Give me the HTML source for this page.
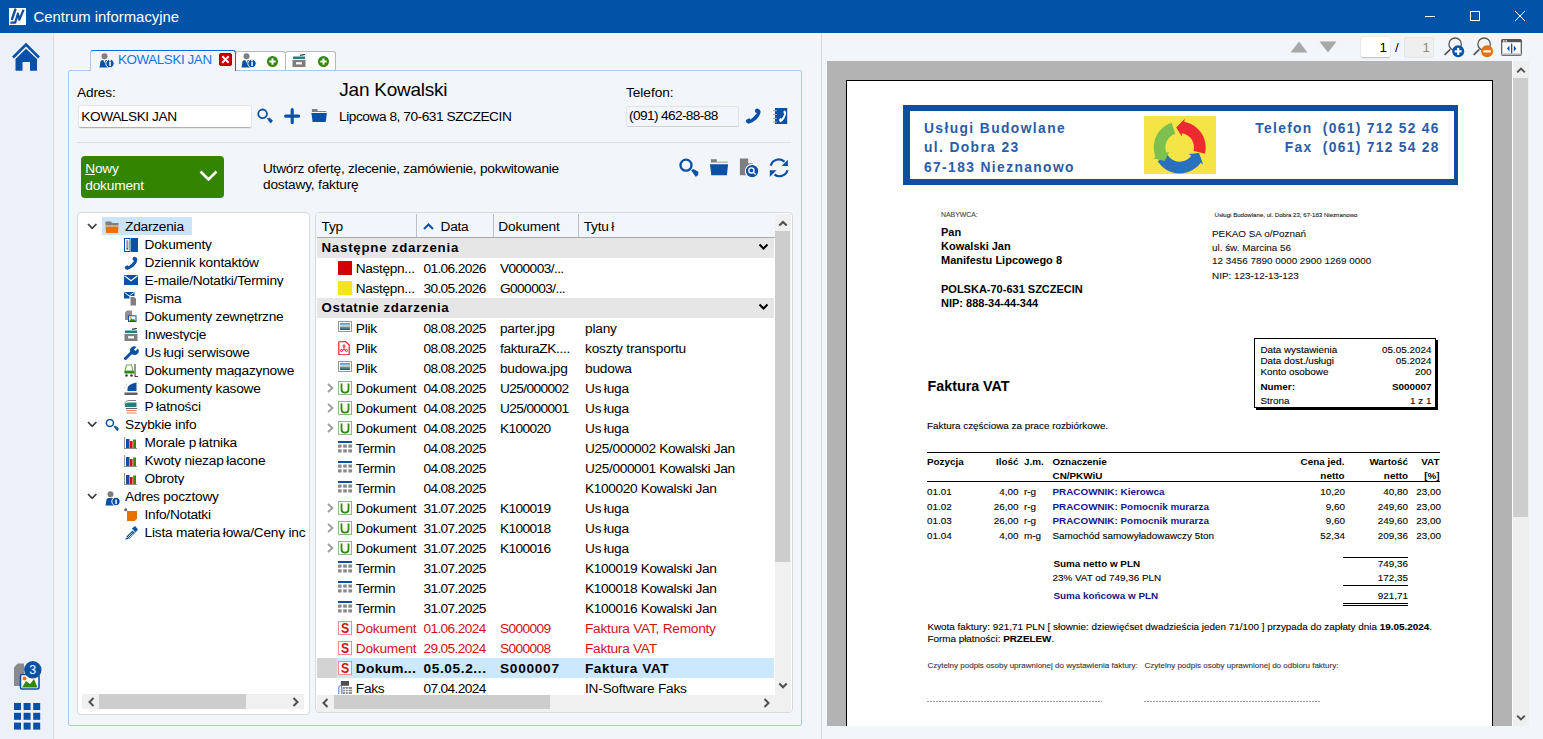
<!DOCTYPE html><html><head><meta charset="utf-8"><style>
html,body{margin:0;padding:0}
body{width:1543px;height:739px;overflow:hidden;position:relative;background:#F2F5FA;font-family:"Liberation Sans",sans-serif;color:#000}
.a{position:absolute}
.t{position:absolute;white-space:nowrap;line-height:1}
</style></head><body>
<div class="a" style="left:0px;top:0px;width:1543px;height:33px;background:#0053A6"></div>
<div class="a" style="left:9px;top:8px;width:17px;height:17px;background:#fff"></div>
<svg class="a" style="left:9px;top:8px" width="17" height="17" viewBox="0 0 17 17"><path d="M6.3 1.6 L3 11.2" stroke="#0F4FA8" stroke-width="2.5" stroke-linecap="round" stroke-dasharray="2 0.6"/><path d="M1.4 14.6 L6.2 14.6 L8.9 5.6 L10.3 11.8 L14.6 1.8" fill="none" stroke="#0F4FA8" stroke-width="2.2" stroke-linejoin="round"/></svg>
<div class="t" style="left:33.5px;top:9.79px;font-size:14.9px;color:#fff;">Centrum informacyjne</div>
<div class="a" style="left:1425px;top:16px;width:10px;height:1px;background:#fff"></div>
<div class="a" style="left:1470px;top:11px;width:8px;height:8px;border:1px solid #fff"></div>
<svg class="a" style="left:1514px;top:10px" width="12" height="12" viewBox="0 0 12 12"><path d="M1 1 L11 11 M11 1 L1 11" stroke="#fff" stroke-width="1"/></svg>
<div class="a" style="left:0px;top:33px;width:53px;height:706px;background:#ECF0F9"></div>
<div class="a" style="left:53px;top:33px;width:1px;height:706px;background:#DCDCDC"></div>
<div class="a" style="left:821px;top:33px;width:1px;height:706px;background:#D8D8D8"></div>
<svg class="a" style="left:10px;top:40px" width="34" height="34" viewBox="0 0 34 34"><path d="M3 17.5 L16 4.5 L29 17.5" fill="none" stroke="#0A51A6" stroke-width="2.6"/><path d="M5.5 19 L16 8.7 L27 19 L27 30.7 L20 30.7 L20 22 L12.5 22 L12.5 30.7 L5.5 30.7 Z" fill="#0A51A6"/></svg>
<svg class="a" style="left:12px;top:660px" width="34" height="32" viewBox="0 0 34 32"><path d="M2 7.5 L5.5 3.5 L12 3.5 L12 26 L2 26 Z" fill="#8A8A8A"/><rect x="8.5" y="14.5" width="18.5" height="14.5" rx="1.5" fill="#fff" stroke="#0A51A6" stroke-width="1.6"/><path d="M10 27.5 L14 21 L18 24 L22 19 L25.5 27.5 Z" fill="#2E8B0A"/><circle cx="12.5" cy="18.5" r="2" fill="#F07800"/><circle cx="20.8" cy="9.8" r="8.7" fill="#0A51A6"/><text x="20.8" y="14.3" font-size="12.5" fill="#fff" text-anchor="middle" font-family="Liberation Sans">3</text></svg>
<svg class="a" style="left:14px;top:703px" width="27" height="27" viewBox="0 0 27 27"><rect x="0.0" y="0.0" width="7" height="7" fill="#0A51A6"/><rect x="9.6" y="0.0" width="7" height="7" fill="#0A51A6"/><rect x="19.2" y="0.0" width="7" height="7" fill="#0A51A6"/><rect x="0.0" y="9.8" width="7" height="7" fill="#0A51A6"/><rect x="9.6" y="9.8" width="7" height="7" fill="#0A51A6"/><rect x="19.2" y="9.8" width="7" height="7" fill="#0A51A6"/><rect x="0.0" y="19.6" width="7" height="7" fill="#0A51A6"/><rect x="9.6" y="19.6" width="7" height="7" fill="#0A51A6"/><rect x="19.2" y="19.6" width="7" height="7" fill="#0A51A6"/></svg>
<div class="a" style="left:68px;top:70px;width:733px;height:655px;border:1px solid #A9C9EC;border-radius:2px;box-sizing:border-box;width:734px;height:656px"></div>
<div class="a" style="left:235px;top:51px;width:51px;height:19px;background:#fff;border:1px solid #B9B9B9;border-bottom:none;border-radius:3px 3px 0 0;box-sizing:border-box"></div>
<div class="a" style="left:285px;top:51px;width:51px;height:19px;background:#fff;border:1px solid #B9B9B9;border-bottom:none;border-radius:3px 3px 0 0;box-sizing:border-box"></div>
<div class="a" style="left:90px;top:50px;width:146px;height:21px;background:#F2F5FB;border:1px solid #A9C9EC;border-top:1px solid #0A6AD6;border-right:1px solid #0A6AD6;border-bottom:none;border-radius:3px 3px 0 0;box-sizing:border-box;box-shadow:inset 0 1px 0 #fff"></div>
<svg class="a" style="left:99px;top:53px" width="16" height="15" viewBox="0 0 16 15"><circle cx="5.5" cy="3.3" r="3" fill="#7F7F7F"/><path d="M0.5 14.5 L1.5 8.5 Q2 7 4 7 L7.5 7 Q9 7 9.5 8.5 L9.5 14.5 Z" fill="#0A51A6"/><path d="M4.3 7 L5.5 10 L6.7 7 Z" fill="#fff"/><circle cx="11" cy="10.5" r="4.2" fill="#0A51A6" stroke="#fff" stroke-width="1"/><rect x="10.3" y="8.6" width="1.5" height="4.4" fill="#fff"/><circle cx="11" cy="7.5" r="0.8" fill="#fff"/></svg>
<div class="t" style="left:118px;top:52.66px;font-size:13.4px;color:#1A72DA;letter-spacing:-0.4px">KOWALSKI JAN</div>
<svg class="a" style="left:219px;top:53px" width="13" height="13" viewBox="0 0 13 13"><rect x="0.5" y="0.5" width="12" height="12" rx="1.5" fill="#CC0000" stroke="#A80000" stroke-width="1"/><path d="M3.3 3.3 L9.7 9.7 M9.7 3.3 L3.3 9.7" stroke="#fff" stroke-width="2"/></svg>
<svg class="a" style="left:241px;top:53px" width="16" height="15" viewBox="0 0 16 15"><circle cx="5.5" cy="3.3" r="3" fill="#7F7F7F"/><path d="M0.5 14.5 L1.5 8.5 Q2 7 4 7 L7.5 7 Q9 7 9.5 8.5 L9.5 14.5 Z" fill="#0A51A6"/><path d="M4.3 7 L5.5 10 L6.7 7 Z" fill="#fff"/><circle cx="11" cy="10.5" r="4.2" fill="#0A51A6" stroke="#fff" stroke-width="1"/><rect x="10.3" y="8.6" width="1.5" height="4.4" fill="#fff"/><circle cx="11" cy="7.5" r="0.8" fill="#fff"/></svg>
<svg class="a" style="left:267px;top:55.5px" width="11" height="11" viewBox="0 0 11 11"><circle cx="5.5" cy="5.5" r="5.5" fill="#2E8B0A"/><rect x="2.3" y="4.5" width="6.4" height="2" fill="#fff"/><rect x="4.5" y="2.3" width="2" height="6.4" fill="#fff"/></svg>
<svg class="a" style="left:292px;top:54px" width="14" height="14" viewBox="0 0 14 14"><path d="M8 1.3 L13 0.3" stroke="#404040" stroke-width="1.2"/><rect x="1" y="2.5" width="12" height="2.6" fill="#1F8080"/><rect x="0.5" y="6" width="13" height="7" fill="#7F7F7F"/><rect x="4" y="8.2" width="6" height="2.2" fill="#fff"/></svg>
<svg class="a" style="left:317.5px;top:55.5px" width="11" height="11" viewBox="0 0 11 11"><circle cx="5.5" cy="5.5" r="5.5" fill="#2E8B0A"/><rect x="2.3" y="4.5" width="6.4" height="2" fill="#fff"/><rect x="4.5" y="2.3" width="2" height="6.4" fill="#fff"/></svg>
<div class="t" style="left:77px;top:86.30px;font-size:13.7px;letter-spacing:-0.149px;">Adres:</div>
<div class="a" style="left:79px;top:106px;width:172px;height:21.5px;background:#fff;border-radius:2px;border-bottom:1px solid #B0B0B0;box-shadow:0 0 0 1px #E6E6E6;box-sizing:border-box"></div>
<div class="t" style="left:81.3px;top:109.60px;font-size:13.7px;letter-spacing:-0.445px;">KOWALSKI JAN</div>
<svg class="a" style="left:254px;top:104px" width="22" height="22" viewBox="0 0 22 22"><circle cx="8.6" cy="9.85" r="4.35" fill="none" stroke="#0A51A6" stroke-width="1.8"/><path d="M13.3 14.5 L15.6 14 L18.5 16.6 L17.2 18.7 L16 18.5 Z" fill="#0A51A6" stroke="#0A51A6" stroke-width="0.6" stroke-linejoin="round"/></svg>
<svg class="a" style="left:284px;top:108px" width="16" height="16" viewBox="0 0 16 16"><path d="M1.6 8.1 L14.6 8.1 M8.2 1.6 L8.2 14.6" stroke="#0A51A6" stroke-width="3.1" stroke-linecap="round"/></svg>
<svg class="a" style="left:311px;top:108px" width="16" height="16" viewBox="0 0 16 16"><path d="M0.9 0.9 L6.5 0.9 L6.5 3.1 L15.2 3.1 L15.2 3.9 L0.9 3.9 Z" fill="#7F7F7F"/><path d="M0.4 5.1 L15.9 5.1 L14.7 14 L1.6 14 Z" fill="#0A51A6"/></svg>
<div class="t" style="left:339.3px;top:79.72px;font-size:19px;letter-spacing:-0.240px;">Jan Kowalski</div>
<div class="t" style="left:339px;top:110.10px;font-size:13.7px;letter-spacing:-0.453px;">Lipcowa 8, 70-631 SZCZECIN</div>
<div class="t" style="left:626px;top:85.70px;font-size:13.7px;letter-spacing:-0.048px;">Telefon:</div>
<div class="a" style="left:626px;top:106px;width:113px;height:21px;background:#F2F5FB;border:1px solid #E3E3E3;border-bottom-color:#CFCFCF;border-radius:2px;box-sizing:border-box"></div>
<div class="t" style="left:629px;top:109.40px;font-size:13.7px;letter-spacing:-0.630px;">(091) 462-88-88</div>
<svg class="a" style="left:745px;top:108px" width="17" height="17" viewBox="0 0 17 17"><path d="M12.26 0.5 Q15 0.9 15.6 3.3 Q15.6 7 11.6 11.26 Q8 14.5 3.82 15.7 Q1.6 15.6 0.7 12.88 Q1.2 11.5 2.19 11.26 L4.47 10.29 L5.44 11.4 Q8.5 9.8 11.94 5.09 L10.31 4.6 Q9.8 3.3 10.2 1.6 Q10.8 0.5 12.26 0.5 Z" fill="#0A51A6"/></svg>
<svg class="a" style="left:772px;top:108px" width="16" height="16" viewBox="0 0 16 16"><rect x="3" y="0" width="12.2" height="16" fill="#0A51A6"/><path d="M1 2.7 L5 2.7 M1 6.5 L5 6.5 M1 10.3 L5 10.3 M1 14 L5 14" stroke="#A8A8A8" stroke-width="1.1"/><g transform="translate(6.7 2) scale(0.48 0.78)"><path d="M12.26 0.5 Q15 0.9 15.6 3.3 Q15.6 7 11.6 11.26 Q8 14.5 3.82 15.7 Q1.6 15.6 0.7 12.88 Q1.2 11.5 2.19 11.26 L4.47 10.29 L5.44 11.4 Q8.5 9.8 11.94 5.09 L10.31 4.6 Q9.8 3.3 10.2 1.6 Q10.8 0.5 12.26 0.5 Z" fill="#fff"/></g></svg>
<div class="a" style="left:77px;top:142px;width:714px;height:1px;background:#D9DDE3"></div>
<div class="a" style="left:81px;top:156px;width:143px;height:42px;background:#338500;border-radius:4px"></div>
<div class="t" style="left:85.3px;top:162.20px;font-size:13.7px;color:#fff;letter-spacing:-0.263px;"><u>N</u>owy</div>
<div class="t" style="left:85.3px;top:179.00px;font-size:13.7px;color:#fff;letter-spacing:-0.200px;">dokument</div>
<svg class="a" style="left:199px;top:170px" width="19" height="12" viewBox="0 0 19 12"><path d="M1.5 1.5 L9.5 9.5 L17.5 1.5" fill="none" stroke="#fff" stroke-width="2.6"/></svg>
<div class="t" style="left:263px;top:161.70px;font-size:13.7px;letter-spacing:-0.264px;">Utwórz ofertę, zlecenie, zamówienie, pokwitowanie</div>
<div class="t" style="left:263px;top:177.70px;font-size:13.7px;letter-spacing:-0.194px;">dostawy, fakturę</div>
<svg class="a" style="left:670px;top:150px" width="130" height="40" viewBox="0 0 130 40"><circle cx="16" cy="15.2" r="5.5" fill="none" stroke="#0A51A6" stroke-width="2.3"/><path d="M21.6 20.2 L23.6 19.6 L28 22 L27.6 25.2 L25.6 26.3 Z" fill="#0A51A6" stroke="#0A51A6" stroke-width="0.8" stroke-linejoin="round"/><path d="M40.9 9.3 L46.8 9.3 L46.8 11.8 L57.7 11.8 L57.7 12.6 L40.9 12.6 Z" fill="#7F7F7F"/><path d="M40 14.3 L58.1 14.3 L56.9 25.3 L41.3 25.3 Z" fill="#0A51A6"/><path d="M69.9 8.4 L78 8.4 L83 13.5 L83 25.3 L69.9 25.3 Z" fill="#7F7F7F"/><path d="M78.3 8.4 L83 13.2 L78.3 13.2 Z" fill="#fff"/><circle cx="82.1" cy="21.1" r="7.3" fill="#fff"/><circle cx="82.1" cy="21.1" r="6.2" fill="#0A51A6"/><circle cx="81.4" cy="20.4" r="2.6" fill="none" stroke="#fff" stroke-width="1.3"/><path d="M83.3 22.3 L85.6 24.6" stroke="#fff" stroke-width="1.4"/><path d="M100.8 15.6 A8.3 8.3 0 0 1 114.6 11.8" fill="none" stroke="#0A51A6" stroke-width="2.2"/><path d="M117.9 9.7 L117.9 16 L111.6 16 Z" fill="#0A51A6"/><path d="M117.5 20.2 A8.3 8.3 0 0 1 104.5 24.5" fill="none" stroke="#0A51A6" stroke-width="2.2"/><path d="M99.8 20.2 L106.6 20.2 L99.8 27 Z" fill="#0A51A6"/></svg>
<div class="a" style="left:77px;top:212px;width:233px;height:503px;background:#fff;border:1px solid #D9D9D9;border-radius:4px;box-sizing:border-box"></div>
<div class="a" style="left:102px;top:217px;width:90px;height:18px;background:#CCE4F7"></div>
<svg class="a" style="left:87.2px;top:223.2px" width="10.4" height="6.3" viewBox="0 0 10.4 6.3"><path d="M1 1 L5.2 5.3 L9.4 1" fill="none" stroke="#3C3C3C" stroke-width="1.7"/></svg>
<svg class="a" style="left:105px;top:221px" width="15" height="15" viewBox="0 0 15 15"><path d="M0.5 0.5 L6 0.5 L7 2 L13.5 2 L13.5 4.5 L0.5 4.5 Z" fill="#7F7F7F"/><path d="M0.5 5.5 L13.5 5.5 L13 12 L1 12 Z" fill="#E87200"/></svg>
<div class="t" style="left:125px;top:219.50px;font-size:13.7px;letter-spacing:-0.228px;">Zdarzenia</div>
<svg class="a" style="left:124px;top:238px" width="15" height="15" viewBox="0 0 15 15"><rect x="0.5" y="0.5" width="5.5" height="13" fill="#fff" stroke="#0A51A6" stroke-width="1"/><rect x="2.2" y="2" width="2.2" height="10" rx="1.1" fill="#9A9A9A"/><rect x="2.8" y="10" width="1" height="1" fill="#333"/><rect x="7" y="0" width="7" height="14" fill="#0A51A6"/></svg>
<div class="t" style="left:144.5px;top:237.50px;font-size:13.7px;width:161px;overflow:hidden;letter-spacing:-0.228px;">Dokumenty</div>
<svg class="a" style="left:124px;top:256px" width="15" height="15" viewBox="0 0 15 15"><g transform="translate(0 0.4) scale(0.86)"><path d="M12.26 0.5 Q15 0.9 15.6 3.3 Q15.6 7 11.6 11.26 Q8 14.5 3.82 15.7 Q1.6 15.6 0.7 12.88 Q1.2 11.5 2.19 11.26 L4.47 10.29 L5.44 11.4 Q8.5 9.8 11.94 5.09 L10.31 4.6 Q9.8 3.3 10.2 1.6 Q10.8 0.5 12.26 0.5 Z" fill="#0A51A6"/></g></svg>
<div class="t" style="left:144.5px;top:255.50px;font-size:13.7px;width:161px;overflow:hidden;letter-spacing:-0.203px;">Dziennik kontaktów</div>
<svg class="a" style="left:124px;top:274px" width="15" height="15" viewBox="0 0 15 15"><rect x="0" y="1" width="14" height="10" fill="#0A51A6"/><path d="M0.5 1.8 L7 6.8 L13.5 1.8" fill="none" stroke="#fff" stroke-width="1.2"/></svg>
<div class="t" style="left:144.5px;top:273.50px;font-size:13.7px;width:161px;overflow:hidden;letter-spacing:-0.246px;">E-maile/Notatki/Terminy</div>
<svg class="a" style="left:124px;top:292px" width="15" height="15" viewBox="0 0 15 15"><rect x="0" y="0" width="10.5" height="6.5" fill="#0A51A6"/><path d="M0.6 0.6 L5.25 4 L9.9 0.6" fill="none" stroke="#fff" stroke-width="1"/><path d="M5.5 4 L10.5 4 L13 6.5 L13 14 L5.5 14 Z" fill="#fff"/><path d="M6.5 5 L10.2 5 L12 6.8 L12 13.5 L6.5 13.5 Z" fill="#7F7F7F"/></svg>
<div class="t" style="left:144.5px;top:291.50px;font-size:13.7px;width:161px;overflow:hidden;letter-spacing:-0.250px;">Pisma</div>
<svg class="a" style="left:124px;top:310px" width="15" height="15" viewBox="0 0 15 15"><path d="M1 2.5 L3 0.5 L8 0.5 L8 10 L1 10 Z" fill="#8F8F8F"/><rect x="4.5" y="5.8" width="7.5" height="5.7" fill="#fff" stroke="#0A51A6" stroke-width="1"/><path d="M5.2 11 L7.3 8.3 L9 9.8 L10 8.8 L11.5 11 Z" fill="#2E8B0A"/><circle cx="6.4" cy="7.6" r="0.8" fill="#F07800"/></svg>
<div class="t" style="left:144.5px;top:309.50px;font-size:13.7px;width:161px;overflow:hidden;letter-spacing:-0.203px;">Dokumenty zewnętrzne</div>
<svg class="a" style="left:124px;top:328px" width="15" height="15" viewBox="0 0 15 15"><path d="M8 1.3 L13 0.3" stroke="#404040" stroke-width="1.2"/><rect x="1" y="2.5" width="12" height="2.6" fill="#1F8080"/><rect x="0.5" y="6" width="13" height="7" fill="#7F7F7F"/><rect x="4" y="8.2" width="6" height="2.2" fill="#fff"/></svg>
<div class="t" style="left:144.5px;top:327.50px;font-size:13.7px;width:161px;overflow:hidden;letter-spacing:-0.225px;">Inwestycje</div>
<svg class="a" style="left:124px;top:346px" width="15" height="15" viewBox="0 0 15 15"><path d="M1.5 12.5 L8 6" stroke="#0A51A6" stroke-width="3" stroke-linecap="round"/><path d="M6.5 6.5 A4.2 4.2 0 0 1 12.5 1 L10 3.5 L11.5 5 L14 2.5 A4.2 4.2 0 0 1 8.5 8.5 Z" fill="#0A51A6"/></svg>
<div class="t" style="left:144.5px;top:345.50px;font-size:13.7px;width:161px;overflow:hidden;letter-spacing:-0.191px;">Us ługi serwisowe</div>
<svg class="a" style="left:124px;top:364px" width="15" height="15" viewBox="0 0 15 15"><path d="M2.5 1 L7.5 1 L9 7 L1 7 Z" fill="none" stroke="#6DAA5A" stroke-width="1.1"/><rect x="0.5" y="7" width="9.5" height="2.5" fill="#2E8B0A"/><circle cx="2.5" cy="11.5" r="1.3" fill="#404040"/><circle cx="7.5" cy="11.5" r="1.3" fill="#404040"/><path d="M11 0 L11 12.5 L14 12.5" fill="none" stroke="#404040" stroke-width="1.1"/></svg>
<div class="t" style="left:144.5px;top:363.50px;font-size:13.7px;width:161px;overflow:hidden;letter-spacing:-0.203px;">Dokumenty magazynowe</div>
<svg class="a" style="left:124px;top:382px" width="15" height="15" viewBox="0 0 15 15"><path d="M3.5 9 L3.5 6 Q4 2 12.5 0.5 L12.5 9 Z" fill="#0A51A6"/><rect x="0.5" y="10.5" width="13" height="2.5" fill="#606060"/><path d="M0.5 5.5 L1 5.5 M2 3 L2.5 3" stroke="#606060" stroke-width="0.9"/></svg>
<div class="t" style="left:144.5px;top:381.50px;font-size:13.7px;width:161px;overflow:hidden;letter-spacing:-0.203px;">Dokumenty kasowe</div>
<svg class="a" style="left:124px;top:400px" width="15" height="15" viewBox="0 0 15 15"><path d="M1 4 Q1 0.5 6 0.5 L12 0.5" fill="none" stroke="#7F7F7F" stroke-width="1"/><path d="M1 5 Q1 2.5 5 2.5 L12.5 2.5 L12.5 7 L1 7 Z" fill="#1F8080"/><path d="M2 8.5 L13 8.5" stroke="#606060" stroke-width="1"/><path d="M2.5 10.5 L12.5 10.5 M2.5 13 L12.5 13" stroke="#F07850" stroke-width="1.1"/></svg>
<div class="t" style="left:144.5px;top:399.50px;font-size:13.7px;width:161px;overflow:hidden;letter-spacing:-0.205px;">P łatności</div>
<svg class="a" style="left:87.2px;top:421.2px" width="10.4" height="6.3" viewBox="0 0 10.4 6.3"><path d="M1 1 L5.2 5.3 L9.4 1" fill="none" stroke="#3C3C3C" stroke-width="1.7"/></svg>
<svg class="a" style="left:105px;top:419px" width="15" height="15" viewBox="0 0 15 15"><circle cx="4.9" cy="4" r="3.55" fill="none" stroke="#0A51A6" stroke-width="1.5"/><path d="M8.9 7.4 L10.2 7.1 L13.4 9.3 L13 11.4 L12 11.6 Z" fill="#0A51A6" stroke="#0A51A6" stroke-width="0.6" stroke-linejoin="round"/></svg>
<div class="t" style="left:125px;top:417.50px;font-size:13.7px;letter-spacing:-0.204px;">Szybkie info</div>
<svg class="a" style="left:124px;top:436px" width="15" height="15" viewBox="0 0 15 15"><rect x="0" y="1" width="0.8" height="12" fill="#808080"/><rect x="0" y="12.2" width="13" height="0.8" fill="#808080"/><rect x="2" y="3" width="3.5" height="9.2" fill="#0A51A6"/><rect x="6" y="5" width="2.6" height="7.2" fill="#D01010"/><rect x="9.2" y="3.5" width="2.8" height="8.7" fill="#2E8B0A"/></svg>
<div class="t" style="left:144.5px;top:435.50px;font-size:13.7px;width:161px;overflow:hidden;letter-spacing:-0.191px;">Morale p łatnika</div>
<svg class="a" style="left:124px;top:454px" width="15" height="15" viewBox="0 0 15 15"><rect x="0" y="1" width="0.8" height="12" fill="#808080"/><rect x="0" y="12.2" width="13" height="0.8" fill="#808080"/><rect x="2" y="3" width="3.5" height="9.2" fill="#0A51A6"/><rect x="6" y="5" width="2.6" height="7.2" fill="#D01010"/><rect x="9.2" y="3.5" width="2.8" height="8.7" fill="#2E8B0A"/></svg>
<div class="t" style="left:144.5px;top:453.50px;font-size:13.7px;width:161px;overflow:hidden;letter-spacing:-0.192px;">Kwoty niezap łacone</div>
<svg class="a" style="left:124px;top:472px" width="15" height="15" viewBox="0 0 15 15"><rect x="0" y="1" width="0.8" height="12" fill="#808080"/><rect x="0" y="12.2" width="13" height="0.8" fill="#808080"/><rect x="2" y="3" width="3.5" height="9.2" fill="#0A51A6"/><rect x="6" y="5" width="2.6" height="7.2" fill="#D01010"/><rect x="9.2" y="3.5" width="2.8" height="8.7" fill="#2E8B0A"/></svg>
<div class="t" style="left:144.5px;top:471.50px;font-size:13.7px;width:161px;overflow:hidden;letter-spacing:-0.242px;">Obroty</div>
<svg class="a" style="left:87.2px;top:493.2px" width="10.4" height="6.3" viewBox="0 0 10.4 6.3"><path d="M1 1 L5.2 5.3 L9.4 1" fill="none" stroke="#3C3C3C" stroke-width="1.7"/></svg>
<svg class="a" style="left:105px;top:491px" width="15" height="15" viewBox="0 0 15 15"><circle cx="5.5" cy="3.3" r="3" fill="#7F7F7F"/><path d="M0.5 14.5 L1.5 8.5 Q2 7 4 7 L7.5 7 Q9 7 9.5 8.5 L9.5 14.5 Z" fill="#0A51A6"/><circle cx="11" cy="10.5" r="4.2" fill="#0A51A6" stroke="#fff" stroke-width="1"/><rect x="10.3" y="8.6" width="1.5" height="4.4" fill="#fff"/></svg>
<div class="t" style="left:125px;top:489.50px;font-size:13.7px;letter-spacing:-0.204px;">Adres pocztowy</div>
<svg class="a" style="left:124px;top:508px" width="15" height="15" viewBox="0 0 15 15"><path d="M3 3 L13 3 L13 10.5 L10.5 13 L3 13 Z" fill="#E87200"/><circle cx="1.7" cy="1.7" r="1.5" fill="#606060"/></svg>
<div class="t" style="left:144.5px;top:507.50px;font-size:13.7px;width:161px;overflow:hidden;letter-spacing:-0.250px;">Info/Notatki</div>
<svg class="a" style="left:124px;top:526px" width="15" height="15" viewBox="0 0 15 15"><path d="M1 13.5 L3 11 L5 13 Z" fill="#0A51A6"/><path d="M2.5 10.5 L8.5 4.5 L11 7 L5 13 Z" fill="#0A51A6"/><path d="M3.5 11.5 L8.5 6.5 M4.5 12.5 L9.5 7.5" stroke="#fff" stroke-width="0.7"/><path d="M8 2.5 L11 0 L14 3.5 L11.5 6.5 Z" fill="#0A51A6"/></svg>
<div class="t" style="left:144.5px;top:525.50px;font-size:13.7px;width:161px;overflow:hidden;letter-spacing:-0.200px;">Lista materia łowa/Ceny inc</div>
<div class="a" style="left:82px;top:694px;width:222px;height:15px;background:#F0F0F0"></div>
<div class="a" style="left:99px;top:694px;width:147px;height:15px;background:#CDCDCD"></div>
<svg class="a" style="left:87px;top:697px" width="9" height="10" viewBox="0 0 9 10"><path d="M6.5 1 L2.5 5 L6.5 9" fill="none" stroke="#505050" stroke-width="2"/></svg>
<svg class="a" style="left:291px;top:697px" width="9" height="10" viewBox="0 0 9 10"><path d="M2.5 1 L6.5 5 L2.5 9" fill="none" stroke="#505050" stroke-width="2"/></svg>
<div class="a" style="left:315px;top:212px;width:478px;height:501px;background:#fff;border:1px solid #D9D9D9;border-radius:4px;box-sizing:border-box"></div>
<div class="a" style="left:316px;top:213px;width:459px;height:24px;background:#F2F5FB;border-radius:3px 0 0 0"></div>
<div class="a" style="left:317px;top:237px;width:458px;height:1px;background:#A8A8A8"></div>
<div class="a" style="left:416px;top:214px;width:1px;height:23px;background:#C0C0C0"></div>
<div class="a" style="left:493px;top:214px;width:1px;height:23px;background:#C0C0C0"></div>
<div class="a" style="left:578px;top:214px;width:1px;height:23px;background:#C0C0C0"></div>
<div class="t" style="left:321.6px;top:220.30px;font-size:13.7px;letter-spacing:-0.283px;">Typ</div>
<svg class="a" style="left:423px;top:223px" width="11" height="7" viewBox="0 0 11 7"><path d="M1 6 L5.5 1.5 L10 6" fill="none" stroke="#0A51A6" stroke-width="2"/></svg>
<div class="t" style="left:440.6px;top:220.30px;font-size:13.7px;letter-spacing:-0.263px;">Data</div>
<div class="t" style="left:498.3px;top:220.30px;font-size:13.7px;letter-spacing:-0.142px;">Dokument</div>
<div class="t" style="left:583.7px;top:220.30px;font-size:13.7px;letter-spacing:-0.208px;">Tytu ł</div>
<div class="a" style="left:775px;top:214px;width:16px;height:481px;background:#F0F0F0"></div>
<div class="a" style="left:775px;top:231px;width:15px;height:331px;background:#CDCDCD"></div>
<svg class="a" style="left:777px;top:217px" width="12" height="12" viewBox="0 0 12 12"><path d="M2.3 8.6 L6 4.9 L9.7 8.6" fill="none" stroke="#505050" stroke-width="2.1"/></svg>
<svg class="a" style="left:777px;top:680px" width="12" height="12" viewBox="0 0 12 12"><path d="M2.3 3.6 L6 7.3 L9.7 3.6" fill="none" stroke="#505050" stroke-width="2.1"/></svg>
<div class="a" style="left:317px;top:238px;width:457px;height:20px;background:#E6E6E6"></div>
<div class="t" style="left:321.5px;top:240.64px;font-size:13.3px;font-weight:bold;letter-spacing:0.746px">Następne zdarzenia</div>
<svg class="a" style="left:758px;top:243px" width="11" height="8" viewBox="0 0 11 8"><path d="M1.5 1.5 L5.5 5.5 L9.5 1.5" fill="none" stroke="#000" stroke-width="2"/></svg>
<div class="a" style="left:317px;top:298px;width:457px;height:20px;background:#E6E6E6"></div>
<div class="t" style="left:321.5px;top:300.64px;font-size:13.3px;font-weight:bold;letter-spacing:0.571px">Ostatnie zdarzenia</div>
<svg class="a" style="left:758px;top:303px" width="11" height="8" viewBox="0 0 11 8"><path d="M1.5 1.5 L5.5 5.5 L9.5 1.5" fill="none" stroke="#000" stroke-width="2"/></svg>
<div class="a" style="left:338px;top:261px;width:14px;height:14px;background:#D40000"></div>
<div class="t" style="left:355.8px;top:261.60px;font-size:13.7px;letter-spacing:-0.345px;">Następn...</div>
<div class="t" style="left:423.5px;top:261.60px;font-size:13.7px;letter-spacing:-0.640px;">01.06.2026</div>
<div class="t" style="left:500px;top:261.60px;font-size:13.7px;letter-spacing:-0.586px;">V000003/...</div>
<div class="a" style="left:338px;top:281px;width:14px;height:14px;background:#F7E51C"></div>
<div class="t" style="left:355.8px;top:281.60px;font-size:13.7px;letter-spacing:-0.345px;">Następn...</div>
<div class="t" style="left:423.5px;top:281.60px;font-size:13.7px;letter-spacing:-0.640px;">30.05.2026</div>
<div class="t" style="left:500px;top:281.60px;font-size:13.7px;letter-spacing:-0.586px;">G000003/...</div>
<svg class="a" style="left:338px;top:321px" width="14" height="14" viewBox="0 0 14 14"><rect x="0.5" y="0.5" width="13" height="10" fill="#fff" stroke="#9A9A9A" stroke-width="1"/><defs><linearGradient id="gi" x1="0" y1="0" x2="0" y2="1"><stop offset="0" stop-color="#3C8CE0"/><stop offset="0.45" stop-color="#CFE4F5"/><stop offset="0.6" stop-color="#6F9A6A"/><stop offset="1" stop-color="#1E5A86"/></linearGradient></defs><rect x="2" y="2" width="10" height="7" fill="url(#gi)"/></svg>
<div class="t" style="left:355.8px;top:321.60px;font-size:13.7px;letter-spacing:-0.263px;">Plik</div>
<div class="t" style="left:423.5px;top:321.60px;font-size:13.7px;letter-spacing:-0.640px;">08.08.2025</div>
<div class="t" style="left:500px;top:321.60px;font-size:13.7px;letter-spacing:-0.240px;">parter.jpg</div>
<div class="t" style="left:585px;top:321.60px;font-size:13.7px;letter-spacing:-0.200px;">plany</div>
<svg class="a" style="left:338px;top:341px" width="14" height="14" viewBox="0 0 14 14"><path d="M0.8 0.8 L8 0.8 L11.2 4 L11.2 13.7 L0.8 13.7 Z" fill="#fff" stroke="#E8141A" stroke-width="1.1" stroke-linejoin="round"/><circle cx="6" cy="5" r="1.1" fill="none" stroke="#E8141A" stroke-width="0.9"/><circle cx="3.5" cy="9.5" r="1.1" fill="none" stroke="#E8141A" stroke-width="0.9"/><circle cx="8.5" cy="9.5" r="1.1" fill="none" stroke="#E8141A" stroke-width="0.9"/><path d="M6 6 L6 8.5 L4.3 9.3 M6 8.5 L7.7 9.3" stroke="#E8141A" stroke-width="0.9" fill="none"/></svg>
<div class="t" style="left:355.8px;top:341.60px;font-size:13.7px;letter-spacing:-0.263px;">Plik</div>
<div class="t" style="left:423.5px;top:341.60px;font-size:13.7px;letter-spacing:-0.640px;">08.08.2025</div>
<div class="t" style="left:500px;top:341.60px;font-size:13.7px;letter-spacing:-0.362px;">fakturaZK....</div>
<div class="t" style="left:585px;top:341.60px;font-size:13.7px;letter-spacing:-0.188px;">koszty transportu</div>
<svg class="a" style="left:338px;top:361px" width="14" height="14" viewBox="0 0 14 14"><rect x="0.5" y="0.5" width="13" height="10" fill="#fff" stroke="#9A9A9A" stroke-width="1"/><defs><linearGradient id="gi" x1="0" y1="0" x2="0" y2="1"><stop offset="0" stop-color="#3C8CE0"/><stop offset="0.45" stop-color="#CFE4F5"/><stop offset="0.6" stop-color="#6F9A6A"/><stop offset="1" stop-color="#1E5A86"/></linearGradient></defs><rect x="2" y="2" width="10" height="7" fill="url(#gi)"/></svg>
<div class="t" style="left:355.8px;top:361.60px;font-size:13.7px;letter-spacing:-0.263px;">Plik</div>
<div class="t" style="left:423.5px;top:361.60px;font-size:13.7px;letter-spacing:-0.640px;">08.08.2025</div>
<div class="t" style="left:500px;top:361.60px;font-size:13.7px;letter-spacing:-0.240px;">budowa.jpg</div>
<div class="t" style="left:585px;top:361.60px;font-size:13.7px;letter-spacing:-0.200px;">budowa</div>
<svg class="a" style="left:338px;top:381px" width="14" height="14" viewBox="0 0 14 14"><rect x="0.5" y="0.5" width="13" height="13" fill="#fff" stroke="#8DBA86" stroke-width="1"/><path d="M3.5 2.5 L3.5 8.5 Q3.5 11.6 7 11.6 Q10.5 11.6 10.5 8.5 L10.5 2.5" fill="none" stroke="#2E8A00" stroke-width="1.8"/></svg>
<svg class="a" style="left:326px;top:383px" width="9" height="10" viewBox="0 0 9 10"><path d="M2 1 L6.5 5 L2 9" fill="none" stroke="#9A9A9A" stroke-width="1.7"/></svg>
<div class="t" style="left:355.8px;top:381.60px;font-size:13.7px;letter-spacing:-0.231px;">Dokument</div>
<div class="t" style="left:423.5px;top:381.60px;font-size:13.7px;letter-spacing:-0.640px;">04.08.2025</div>
<div class="t" style="left:500px;top:381.60px;font-size:13.7px;letter-spacing:-0.595px;">U25/000002</div>
<div class="t" style="left:585px;top:381.60px;font-size:13.7px;letter-spacing:-0.207px;">Us ługa</div>
<svg class="a" style="left:338px;top:401px" width="14" height="14" viewBox="0 0 14 14"><rect x="0.5" y="0.5" width="13" height="13" fill="#fff" stroke="#8DBA86" stroke-width="1"/><path d="M3.5 2.5 L3.5 8.5 Q3.5 11.6 7 11.6 Q10.5 11.6 10.5 8.5 L10.5 2.5" fill="none" stroke="#2E8A00" stroke-width="1.8"/></svg>
<svg class="a" style="left:326px;top:403px" width="9" height="10" viewBox="0 0 9 10"><path d="M2 1 L6.5 5 L2 9" fill="none" stroke="#9A9A9A" stroke-width="1.7"/></svg>
<div class="t" style="left:355.8px;top:401.60px;font-size:13.7px;letter-spacing:-0.231px;">Dokument</div>
<div class="t" style="left:423.5px;top:401.60px;font-size:13.7px;letter-spacing:-0.640px;">04.08.2025</div>
<div class="t" style="left:500px;top:401.60px;font-size:13.7px;letter-spacing:-0.595px;">U25/000001</div>
<div class="t" style="left:585px;top:401.60px;font-size:13.7px;letter-spacing:-0.207px;">Us ługa</div>
<svg class="a" style="left:338px;top:421px" width="14" height="14" viewBox="0 0 14 14"><rect x="0.5" y="0.5" width="13" height="13" fill="#fff" stroke="#8DBA86" stroke-width="1"/><path d="M3.5 2.5 L3.5 8.5 Q3.5 11.6 7 11.6 Q10.5 11.6 10.5 8.5 L10.5 2.5" fill="none" stroke="#2E8A00" stroke-width="1.8"/></svg>
<svg class="a" style="left:326px;top:423px" width="9" height="10" viewBox="0 0 9 10"><path d="M2 1 L6.5 5 L2 9" fill="none" stroke="#9A9A9A" stroke-width="1.7"/></svg>
<div class="t" style="left:355.8px;top:421.60px;font-size:13.7px;letter-spacing:-0.231px;">Dokument</div>
<div class="t" style="left:423.5px;top:421.60px;font-size:13.7px;letter-spacing:-0.640px;">04.08.2025</div>
<div class="t" style="left:500px;top:421.60px;font-size:13.7px;letter-spacing:-0.621px;">K100020</div>
<div class="t" style="left:585px;top:421.60px;font-size:13.7px;letter-spacing:-0.207px;">Us ługa</div>
<svg class="a" style="left:338px;top:441px" width="14" height="14" viewBox="0 0 14 14"><rect x="0" y="0" width="14" height="2" fill="#0A51A6"/><rect x="0" y="3.5" width="3.6" height="3.2" fill="#8A8A8A"/><rect x="5.2" y="3.5" width="3.6" height="3.2" fill="#8A8A8A"/><rect x="10.4" y="3.5" width="3.6" height="3.2" fill="#8A8A8A"/><rect x="0" y="8.3" width="3.6" height="3.2" fill="#8A8A8A"/><rect x="5.2" y="8.3" width="3.6" height="3.2" fill="#8A8A8A"/><rect x="10.4" y="8.3" width="3.6" height="3.2" fill="#8A8A8A"/></svg>
<div class="t" style="left:355.8px;top:441.60px;font-size:13.7px;letter-spacing:-0.242px;">Termin</div>
<div class="t" style="left:423.5px;top:441.60px;font-size:13.7px;letter-spacing:-0.640px;">04.08.2025</div>
<div class="t" style="left:585px;top:441.60px;font-size:13.7px;letter-spacing:-0.376px;">U25/000002 Kowalski Jan</div>
<svg class="a" style="left:338px;top:461px" width="14" height="14" viewBox="0 0 14 14"><rect x="0" y="0" width="14" height="2" fill="#0A51A6"/><rect x="0" y="3.5" width="3.6" height="3.2" fill="#8A8A8A"/><rect x="5.2" y="3.5" width="3.6" height="3.2" fill="#8A8A8A"/><rect x="10.4" y="3.5" width="3.6" height="3.2" fill="#8A8A8A"/><rect x="0" y="8.3" width="3.6" height="3.2" fill="#8A8A8A"/><rect x="5.2" y="8.3" width="3.6" height="3.2" fill="#8A8A8A"/><rect x="10.4" y="8.3" width="3.6" height="3.2" fill="#8A8A8A"/></svg>
<div class="t" style="left:355.8px;top:461.60px;font-size:13.7px;letter-spacing:-0.242px;">Termin</div>
<div class="t" style="left:423.5px;top:461.60px;font-size:13.7px;letter-spacing:-0.640px;">04.08.2025</div>
<div class="t" style="left:585px;top:461.60px;font-size:13.7px;letter-spacing:-0.376px;">U25/000001 Kowalski Jan</div>
<svg class="a" style="left:338px;top:481px" width="14" height="14" viewBox="0 0 14 14"><rect x="0" y="0" width="14" height="2" fill="#0A51A6"/><rect x="0" y="3.5" width="3.6" height="3.2" fill="#8A8A8A"/><rect x="5.2" y="3.5" width="3.6" height="3.2" fill="#8A8A8A"/><rect x="10.4" y="3.5" width="3.6" height="3.2" fill="#8A8A8A"/><rect x="0" y="8.3" width="3.6" height="3.2" fill="#8A8A8A"/><rect x="5.2" y="8.3" width="3.6" height="3.2" fill="#8A8A8A"/><rect x="10.4" y="8.3" width="3.6" height="3.2" fill="#8A8A8A"/></svg>
<div class="t" style="left:355.8px;top:481.60px;font-size:13.7px;letter-spacing:-0.242px;">Termin</div>
<div class="t" style="left:423.5px;top:481.60px;font-size:13.7px;letter-spacing:-0.640px;">04.08.2025</div>
<div class="t" style="left:585px;top:481.60px;font-size:13.7px;letter-spacing:-0.353px;">K100020 Kowalski Jan</div>
<svg class="a" style="left:338px;top:501px" width="14" height="14" viewBox="0 0 14 14"><rect x="0.5" y="0.5" width="13" height="13" fill="#fff" stroke="#8DBA86" stroke-width="1"/><path d="M3.5 2.5 L3.5 8.5 Q3.5 11.6 7 11.6 Q10.5 11.6 10.5 8.5 L10.5 2.5" fill="none" stroke="#2E8A00" stroke-width="1.8"/></svg>
<svg class="a" style="left:326px;top:503px" width="9" height="10" viewBox="0 0 9 10"><path d="M2 1 L6.5 5 L2 9" fill="none" stroke="#9A9A9A" stroke-width="1.7"/></svg>
<div class="t" style="left:355.8px;top:501.60px;font-size:13.7px;letter-spacing:-0.231px;">Dokument</div>
<div class="t" style="left:423.5px;top:501.60px;font-size:13.7px;letter-spacing:-0.640px;">31.07.2025</div>
<div class="t" style="left:500px;top:501.60px;font-size:13.7px;letter-spacing:-0.621px;">K100019</div>
<div class="t" style="left:585px;top:501.60px;font-size:13.7px;letter-spacing:-0.207px;">Us ługa</div>
<svg class="a" style="left:338px;top:521px" width="14" height="14" viewBox="0 0 14 14"><rect x="0.5" y="0.5" width="13" height="13" fill="#fff" stroke="#8DBA86" stroke-width="1"/><path d="M3.5 2.5 L3.5 8.5 Q3.5 11.6 7 11.6 Q10.5 11.6 10.5 8.5 L10.5 2.5" fill="none" stroke="#2E8A00" stroke-width="1.8"/></svg>
<svg class="a" style="left:326px;top:523px" width="9" height="10" viewBox="0 0 9 10"><path d="M2 1 L6.5 5 L2 9" fill="none" stroke="#9A9A9A" stroke-width="1.7"/></svg>
<div class="t" style="left:355.8px;top:521.60px;font-size:13.7px;letter-spacing:-0.231px;">Dokument</div>
<div class="t" style="left:423.5px;top:521.60px;font-size:13.7px;letter-spacing:-0.640px;">31.07.2025</div>
<div class="t" style="left:500px;top:521.60px;font-size:13.7px;letter-spacing:-0.621px;">K100018</div>
<div class="t" style="left:585px;top:521.60px;font-size:13.7px;letter-spacing:-0.207px;">Us ługa</div>
<svg class="a" style="left:338px;top:541px" width="14" height="14" viewBox="0 0 14 14"><rect x="0.5" y="0.5" width="13" height="13" fill="#fff" stroke="#8DBA86" stroke-width="1"/><path d="M3.5 2.5 L3.5 8.5 Q3.5 11.6 7 11.6 Q10.5 11.6 10.5 8.5 L10.5 2.5" fill="none" stroke="#2E8A00" stroke-width="1.8"/></svg>
<svg class="a" style="left:326px;top:543px" width="9" height="10" viewBox="0 0 9 10"><path d="M2 1 L6.5 5 L2 9" fill="none" stroke="#9A9A9A" stroke-width="1.7"/></svg>
<div class="t" style="left:355.8px;top:541.60px;font-size:13.7px;letter-spacing:-0.231px;">Dokument</div>
<div class="t" style="left:423.5px;top:541.60px;font-size:13.7px;letter-spacing:-0.640px;">31.07.2025</div>
<div class="t" style="left:500px;top:541.60px;font-size:13.7px;letter-spacing:-0.621px;">K100016</div>
<div class="t" style="left:585px;top:541.60px;font-size:13.7px;letter-spacing:-0.207px;">Us ługa</div>
<svg class="a" style="left:338px;top:561px" width="14" height="14" viewBox="0 0 14 14"><rect x="0" y="0" width="14" height="2" fill="#0A51A6"/><rect x="0" y="3.5" width="3.6" height="3.2" fill="#8A8A8A"/><rect x="5.2" y="3.5" width="3.6" height="3.2" fill="#8A8A8A"/><rect x="10.4" y="3.5" width="3.6" height="3.2" fill="#8A8A8A"/><rect x="0" y="8.3" width="3.6" height="3.2" fill="#8A8A8A"/><rect x="5.2" y="8.3" width="3.6" height="3.2" fill="#8A8A8A"/><rect x="10.4" y="8.3" width="3.6" height="3.2" fill="#8A8A8A"/></svg>
<div class="t" style="left:355.8px;top:561.60px;font-size:13.7px;letter-spacing:-0.242px;">Termin</div>
<div class="t" style="left:423.5px;top:561.60px;font-size:13.7px;letter-spacing:-0.640px;">31.07.2025</div>
<div class="t" style="left:585px;top:561.60px;font-size:13.7px;letter-spacing:-0.353px;">K100019 Kowalski Jan</div>
<svg class="a" style="left:338px;top:581px" width="14" height="14" viewBox="0 0 14 14"><rect x="0" y="0" width="14" height="2" fill="#0A51A6"/><rect x="0" y="3.5" width="3.6" height="3.2" fill="#8A8A8A"/><rect x="5.2" y="3.5" width="3.6" height="3.2" fill="#8A8A8A"/><rect x="10.4" y="3.5" width="3.6" height="3.2" fill="#8A8A8A"/><rect x="0" y="8.3" width="3.6" height="3.2" fill="#8A8A8A"/><rect x="5.2" y="8.3" width="3.6" height="3.2" fill="#8A8A8A"/><rect x="10.4" y="8.3" width="3.6" height="3.2" fill="#8A8A8A"/></svg>
<div class="t" style="left:355.8px;top:581.60px;font-size:13.7px;letter-spacing:-0.242px;">Termin</div>
<div class="t" style="left:423.5px;top:581.60px;font-size:13.7px;letter-spacing:-0.640px;">31.07.2025</div>
<div class="t" style="left:585px;top:581.60px;font-size:13.7px;letter-spacing:-0.353px;">K100018 Kowalski Jan</div>
<svg class="a" style="left:338px;top:601px" width="14" height="14" viewBox="0 0 14 14"><rect x="0" y="0" width="14" height="2" fill="#0A51A6"/><rect x="0" y="3.5" width="3.6" height="3.2" fill="#8A8A8A"/><rect x="5.2" y="3.5" width="3.6" height="3.2" fill="#8A8A8A"/><rect x="10.4" y="3.5" width="3.6" height="3.2" fill="#8A8A8A"/><rect x="0" y="8.3" width="3.6" height="3.2" fill="#8A8A8A"/><rect x="5.2" y="8.3" width="3.6" height="3.2" fill="#8A8A8A"/><rect x="10.4" y="8.3" width="3.6" height="3.2" fill="#8A8A8A"/></svg>
<div class="t" style="left:355.8px;top:601.60px;font-size:13.7px;letter-spacing:-0.242px;">Termin</div>
<div class="t" style="left:423.5px;top:601.60px;font-size:13.7px;letter-spacing:-0.640px;">31.07.2025</div>
<div class="t" style="left:585px;top:601.60px;font-size:13.7px;letter-spacing:-0.353px;">K100016 Kowalski Jan</div>
<svg class="a" style="left:338px;top:621px" width="14" height="14" viewBox="0 0 14 14"><rect x="0.5" y="0.5" width="13" height="13" fill="#fff" stroke="#E89090" stroke-width="1"/><text x="7" y="11.9" font-size="14" font-weight="bold" fill="#D0131B" text-anchor="middle" font-family="Liberation Sans" transform="translate(7 0) scale(0.88 1) translate(-7 0)">S</text></svg>
<div class="t" style="left:355.8px;top:621.60px;font-size:13.7px;color:#D0131B;letter-spacing:-0.231px;">Dokument</div>
<div class="t" style="left:423.5px;top:621.60px;font-size:13.7px;color:#D0131B;letter-spacing:-0.640px;">01.06.2024</div>
<div class="t" style="left:500px;top:621.60px;font-size:13.7px;color:#D0131B;letter-spacing:-0.621px;">S000009</div>
<div class="t" style="left:585px;top:621.60px;font-size:13.7px;color:#D0131B;letter-spacing:-0.248px;">Faktura VAT, Remonty</div>
<svg class="a" style="left:338px;top:641px" width="14" height="14" viewBox="0 0 14 14"><rect x="0.5" y="0.5" width="13" height="13" fill="#fff" stroke="#E89090" stroke-width="1"/><text x="7" y="11.9" font-size="14" font-weight="bold" fill="#D0131B" text-anchor="middle" font-family="Liberation Sans" transform="translate(7 0) scale(0.88 1) translate(-7 0)">S</text></svg>
<div class="t" style="left:355.8px;top:641.60px;font-size:13.7px;color:#D0131B;letter-spacing:-0.231px;">Dokument</div>
<div class="t" style="left:423.5px;top:641.60px;font-size:13.7px;color:#D0131B;letter-spacing:-0.640px;">29.05.2024</div>
<div class="t" style="left:500px;top:641.60px;font-size:13.7px;color:#D0131B;letter-spacing:-0.621px;">S000008</div>
<div class="t" style="left:585px;top:641.60px;font-size:13.7px;color:#D0131B;letter-spacing:-0.273px;">Faktura VAT</div>
<div class="a" style="left:317px;top:658px;width:20px;height:20px;background:#D3D3D3"></div>
<div class="a" style="left:337px;top:658px;width:437px;height:20px;background:#CCE8FF"></div>
<svg class="a" style="left:338px;top:661px" width="14" height="14" viewBox="0 0 14 14"><rect x="0.5" y="0.5" width="13" height="13" fill="#fff" stroke="#E89090" stroke-width="1"/><text x="7" y="11.9" font-size="14" font-weight="bold" fill="#D0131B" text-anchor="middle" font-family="Liberation Sans" transform="translate(7 0) scale(0.88 1) translate(-7 0)">S</text></svg>
<div class="t" style="left:355.8px;top:661.60px;font-size:13.7px;font-weight:bold;letter-spacing:0.3px">Dokum...</div>
<div class="t" style="left:423.5px;top:661.60px;font-size:13.7px;font-weight:bold;letter-spacing:0.6px">05.05.2...</div>
<div class="t" style="left:500px;top:661.60px;font-size:13.7px;font-weight:bold;letter-spacing:0.7px">S000007</div>
<div class="t" style="left:585px;top:661.60px;font-size:13.7px;font-weight:bold;letter-spacing:0.5px">Faktura VAT</div>
<svg class="a" style="left:338px;top:681px" width="14" height="14" viewBox="0 0 14 14"><rect x="2.8" y="0" width="8.2" height="4.8" fill="#505050"/><rect x="4.7" y="6" width="9.3" height="7" fill="#8A8A8A"/><path d="M7.4 6.5 L7.4 13 M10.2 6.5 L10.2 13 M4.7 8.4 L14 8.4 M4.7 10.7 L14 10.7" stroke="#fff" stroke-width="0.8"/><path d="M0.8 13 L0.8 7 Q0.8 4.6 2.3 4.6 Q3.8 4.6 3.8 7 L3.8 13" fill="none" stroke="#4A78C8" stroke-width="1"/></svg>
<div class="t" style="left:355.8px;top:681.60px;font-size:13.7px;letter-spacing:-0.263px;">Faks</div>
<div class="t" style="left:423.5px;top:681.60px;font-size:13.7px;letter-spacing:-0.640px;">07.04.2024</div>
<div class="t" style="left:585px;top:681.60px;font-size:13.7px;letter-spacing:-0.256px;">IN-Software Faks</div>
<div class="a" style="left:317px;top:695px;width:458px;height:17px;background:#F0F0F0"></div>
<div class="a" style="left:334px;top:695px;width:216px;height:14px;background:#CDCDCD"></div>
<div class="a" style="left:775px;top:695px;width:16px;height:17px;background:#F0F0F0"></div>
<svg class="a" style="left:321px;top:698px" width="9" height="10" viewBox="0 0 9 10"><path d="M6.5 1 L2.5 5 L6.5 9" fill="none" stroke="#505050" stroke-width="2"/></svg>
<svg class="a" style="left:762px;top:698px" width="9" height="10" viewBox="0 0 9 10"><path d="M2.5 1 L6.5 5 L2.5 9" fill="none" stroke="#505050" stroke-width="2"/></svg>
<svg class="a" style="left:1290px;top:41px" width="18" height="12" viewBox="0 0 18 12"><path d="M0.5 11.5 L9 0.5 L17.5 11.5 Z" fill="#A8A8A8"/></svg>
<svg class="a" style="left:1319px;top:41px" width="18" height="12" viewBox="0 0 18 12"><path d="M0.5 0.5 L9 11.5 L17.5 0.5 Z" fill="#A8A8A8"/></svg>
<div class="a" style="left:1361px;top:37px;width:29px;height:21px;background:#fff;border-radius:2px;border-bottom:1px solid #C8C8C8;box-shadow:0 0 0 1px #EAEAEA;box-sizing:border-box"></div>
<div class="t" style="right:156px;top:40.74px;font-size:13.3px;text-align:right;">1</div>
<div class="t" style="left:1395px;top:40.74px;font-size:13.3px;">/</div>
<div class="a" style="left:1404px;top:37px;width:30px;height:21px;background:#EFEFEF;border:1px solid #E6E6E6;border-radius:2px;box-sizing:border-box"></div>
<div class="t" style="right:113px;top:40.74px;font-size:13.3px;text-align:right;color:#8A8A8A;">1</div>
<svg class="a" style="left:1443px;top:36px" width="24" height="24" viewBox="0 0 24 24"><path d="M7.3 13.3 L1.6 18.9" stroke="#555" stroke-width="1.7"/><circle cx="12.15" cy="8.2" r="6.2" fill="none" stroke="#555" stroke-width="1.3"/><circle cx="15.2" cy="15.35" r="6" fill="#0A51A6"/><rect x="11.7" y="14.25" width="7" height="2.2" fill="#fff"/><rect x="14.1" y="11.85" width="2.2" height="7" fill="#fff"/></svg>
<svg class="a" style="left:1472px;top:36px" width="24" height="24" viewBox="0 0 24 24"><path d="M7.3 13.3 L1.6 18.9" stroke="#555" stroke-width="1.7"/><circle cx="12.1" cy="8.2" r="6.2" fill="none" stroke="#555" stroke-width="1.3"/><circle cx="15.1" cy="15.35" r="6" fill="#E87200"/><rect x="11.2" y="14.15" width="7.8" height="2.4" rx="1" fill="#fff"/></svg>
<svg class="a" style="left:1501px;top:39px" width="21" height="17" viewBox="0 0 21 17"><rect x="0.7" y="0.7" width="19.6" height="15.6" rx="1" fill="#fff" stroke="#555" stroke-width="1.2"/><rect x="0.7" y="0.7" width="19.6" height="2.5" fill="#555"/><rect x="2" y="1.3" width="1.5" height="1.3" fill="#fff"/><rect x="4.5" y="1.3" width="1.5" height="1.3" fill="#fff"/><rect x="10" y="4.5" width="1.3" height="10" fill="#0A51A6"/><path d="M8.5 6.5 L6 9.5 L8.5 12.5 Z M12.8 6.5 L15.3 9.5 L12.8 12.5 Z" fill="#0A51A6"/><rect x="0.7" y="14.3" width="19.6" height="2" fill="#BBB"/></svg>
<div class="a" style="left:827px;top:61px;width:685px;height:665px;background:#B3B3B3"></div>
<div class="a" style="left:1512px;top:61px;width:1px;height:665px;background:#FFFFFF"></div>
<div class="a" style="left:1513px;top:61px;width:16px;height:665px;background:#EFEFEF"></div>
<div class="a" style="left:1513px;top:78px;width:15px;height:439px;background:#CDCDCD"></div>
<svg class="a" style="left:1515px;top:66px" width="12" height="8" viewBox="0 0 12 8"><path d="M2.2 6.3 L6 2.5 L9.8 6.3" fill="none" stroke="#505050" stroke-width="1.9"/></svg>
<svg class="a" style="left:1515px;top:714px" width="12" height="8" viewBox="0 0 12 8"><path d="M2.2 1.7 L6 5.5 L9.8 1.7" fill="none" stroke="#505050" stroke-width="1.9"/></svg>
<div class="a" style="left:846px;top:80px;width:647px;height:646px;background:#fff;border:1px solid #000;border-bottom:none;box-sizing:border-box"></div>
<div class="a" style="left:903px;top:105px;width:555px;height:80px;border:solid #0F4DA0;border-width:6px 4px 6px 7px;box-sizing:border-box"></div>
<div class="t" style="left:924px;top:121.72px;font-size:13.8px;font-weight:bold;color:#2A5DA8;letter-spacing:1.406px">Usługi Budowlane</div>
<div class="t" style="left:924px;top:141.22px;font-size:13.8px;font-weight:bold;color:#2A5DA8;letter-spacing:1.376px">ul. Dobra 23</div>
<div class="t" style="left:924px;top:160.72px;font-size:13.8px;font-weight:bold;color:#2A5DA8;letter-spacing:1.388px">67-183 Nieznanowo</div>
<div class="t" style="right:103.19393310546866px;top:122.02px;font-size:13.8px;text-align:right;font-weight:bold;color:#2A5DA8;letter-spacing:1.306px">Telefon&nbsp; (061) 712 52 46</div>
<div class="t" style="right:103.19393310546866px;top:141.22px;font-size:13.8px;text-align:right;font-weight:bold;color:#2A5DA8;letter-spacing:1.306px">Fax&nbsp; (061) 712 54 28</div>
<svg class="a" style="left:1144px;top:116px" width="72" height="58" viewBox="0 0 72 58"><rect width="72" height="58" fill="#F5E445"/><path d="M60.93 37.69 L61.55 34.19 L61.69 30.64 L61.34 27.11 L60.52 23.65 L59.23 20.34 L57.51 17.24 L55.37 14.40 L52.87 11.88 L50.05 9.72 L46.96 7.97 L43.66 6.65 L40.21 5.79 L40.74 2.84 L32.20 11.56 L37.66 20.27 L38.18 17.32 L40.08 17.79 L41.89 18.51 L43.59 19.48 L45.14 20.66 L46.52 22.05 L47.69 23.61 L48.64 25.32 L49.35 27.14 L49.80 29.04 L49.99 30.98 L49.92 32.94 L49.58 34.86 Z" fill="#EC2A32"/><path d="M13.65 45.18 L16.18 48.57 L19.22 51.51 L22.70 53.92 L26.52 55.73 L30.59 56.89 L34.79 57.38 L39.02 57.19 L43.16 56.31 L47.10 54.77 L50.74 52.61 L53.98 49.89 L56.73 46.68 L59.16 48.45 L55.07 36.95 L44.84 38.04 L47.27 39.81 L45.75 41.57 L43.97 43.07 L41.97 44.25 L39.80 45.10 L37.53 45.58 L35.20 45.69 L32.89 45.42 L30.65 44.78 L28.55 43.78 L26.64 42.46 L24.96 40.84 L23.57 38.98 Z" fill="#2A70BE"/><path d="M27.67 6.67 L24.37 8.00 L21.29 9.76 L18.47 11.93 L15.98 14.46 L13.85 17.30 L12.14 20.41 L10.86 23.73 L10.04 27.18 L9.71 30.72 L9.86 34.27 L10.49 37.76 L11.59 41.14 L8.81 42.26 L20.73 44.88 L25.22 35.63 L22.44 36.76 L21.83 34.90 L21.49 32.98 L21.40 31.03 L21.59 29.08 L22.04 27.18 L22.74 25.36 L23.68 23.65 L24.85 22.08 L26.22 20.69 L27.77 19.50 L29.47 18.53 L31.28 17.80 Z" fill="#7CC04E"/></svg>
<div class="t" style="left:941px;top:211.76px;font-size:6.9px;color:#444;;-webkit-text-stroke:0.1px currentColor">NABYWCA:</div>
<div class="t" style="left:941px;top:227.29px;font-size:11px;font-weight:bold;">Pan</div>
<div class="t" style="left:941px;top:241.09px;font-size:11px;font-weight:bold;">Kowalski Jan</div>
<div class="t" style="left:941px;top:254.99px;font-size:11px;font-weight:bold;">Manifestu Lipcowego 8</div>
<div class="t" style="left:941px;top:284.19px;font-size:11px;font-weight:bold;">POLSKA-70-631 SZCZECIN</div>
<div class="t" style="left:941px;top:297.99px;font-size:11px;font-weight:bold;">NIP: 888-34-44-344</div>
<div class="t" style="left:1214.5px;top:211.74px;font-size:6.1px;color:#222;;-webkit-text-stroke:0.1px currentColor">Usługi Budowlane, ul. Dobra 23, 67-183 Nieznanowo</div>
<div class="t" style="left:1212px;top:228.82px;font-size:9.9px;color:#111;;-webkit-text-stroke:0.1px currentColor">PEKAO SA o/Poznań</div>
<div class="t" style="left:1212px;top:242.82px;font-size:9.9px;color:#111;;-webkit-text-stroke:0.1px currentColor">ul. św. Marcina 56</div>
<div class="t" style="left:1212px;top:256.22px;font-size:9.9px;color:#111;;-webkit-text-stroke:0.1px currentColor">12 3456 7890 0000 2900 1269 0000</div>
<div class="t" style="left:1212px;top:271.42px;font-size:9.9px;color:#111;;-webkit-text-stroke:0.1px currentColor">NIP: 123-12-13-123</div>
<div class="a" style="left:1256px;top:340px;width:182px;height:70px;background:#000"></div>
<div class="a" style="left:1254px;top:338px;width:182px;height:70px;background:#fff;border:1px solid #000;box-sizing:border-box"></div>
<div class="t" style="left:1260.4px;top:345.02px;font-size:9.9px;;-webkit-text-stroke:0.1px currentColor">Data wystawienia</div>
<div class="t" style="right:111.5px;top:345.02px;font-size:9.9px;text-align:right;;-webkit-text-stroke:0.1px currentColor">05.05.2024</div>
<div class="t" style="left:1260.4px;top:356.32px;font-size:9.9px;;-webkit-text-stroke:0.1px currentColor">Data dost./usługi</div>
<div class="t" style="right:111.5px;top:356.32px;font-size:9.9px;text-align:right;;-webkit-text-stroke:0.1px currentColor">05.2024</div>
<div class="t" style="left:1260.4px;top:367.12px;font-size:9.9px;;-webkit-text-stroke:0.1px currentColor">Konto osobowe</div>
<div class="t" style="right:111.5px;top:367.12px;font-size:9.9px;text-align:right;;-webkit-text-stroke:0.1px currentColor">200</div>
<div class="t" style="left:1260.4px;top:381.72px;font-size:9.9px;font-weight:bold;">Numer:</div>
<div class="t" style="right:111.5px;top:381.72px;font-size:9.9px;text-align:right;font-weight:bold;">S000007</div>
<div class="t" style="left:1260.4px;top:396.32px;font-size:9.9px;;-webkit-text-stroke:0.1px currentColor">Strona</div>
<div class="t" style="right:111.5px;top:396.32px;font-size:9.9px;text-align:right;;-webkit-text-stroke:0.1px currentColor">1 z 1</div>
<div class="t" style="left:927.5px;top:379.30px;font-size:14.3px;font-weight:bold;">Faktura VAT</div>
<div class="t" style="left:927px;top:421.32px;font-size:9.9px;;-webkit-text-stroke:0.1px currentColor">Faktura częściowa za prace rozbiórkowe.</div>
<div class="a" style="left:927px;top:452px;width:513px;height:1px;background:#000"></div>
<div class="a" style="left:927px;top:481px;width:513px;height:1px;background:#000"></div>
<div class="t" style="left:927px;top:457.02px;font-size:9.9px;font-weight:bold;">Pozycja</div>
<div class="t" style="right:524.5px;top:457.02px;font-size:9.9px;text-align:right;font-weight:bold;">Ilość</div>
<div class="t" style="left:1024px;top:457.02px;font-size:9.9px;font-weight:bold;">J.m.</div>
<div class="t" style="left:1052.5px;top:457.02px;font-size:9.9px;font-weight:bold;">Oznaczenie</div>
<div class="t" style="left:1052.5px;top:470.92px;font-size:9.9px;font-weight:bold;">CN/PKWiU</div>
<div class="t" style="right:198.5px;top:457.02px;font-size:9.9px;text-align:right;font-weight:bold;">Cena jed.</div>
<div class="t" style="right:198.5px;top:470.92px;font-size:9.9px;text-align:right;font-weight:bold;">netto</div>
<div class="t" style="right:135px;top:457.02px;font-size:9.9px;text-align:right;font-weight:bold;">Wartość</div>
<div class="t" style="right:135px;top:470.92px;font-size:9.9px;text-align:right;font-weight:bold;">netto</div>
<div class="t" style="right:103.5px;top:457.02px;font-size:9.9px;text-align:right;font-weight:bold;">VAT</div>
<div class="t" style="right:103.5px;top:470.92px;font-size:9.9px;text-align:right;font-weight:bold;">[%]</div>
<div class="t" style="left:927px;top:487.22px;font-size:9.9px;;-webkit-text-stroke:0.1px currentColor">01.01</div>
<div class="t" style="right:524.5px;top:487.22px;font-size:9.9px;text-align:right;;-webkit-text-stroke:0.1px currentColor">4,00</div>
<div class="t" style="left:1024px;top:487.22px;font-size:9.9px;;-webkit-text-stroke:0.1px currentColor">r-g</div>
<div class="t" style="left:1052.5px;top:487.22px;font-size:9.9px;font-weight:bold;color:#17178A;">PRACOWNIK: Kierowca</div>
<div class="t" style="right:198px;top:487.22px;font-size:9.9px;text-align:right;;-webkit-text-stroke:0.1px currentColor">10,20</div>
<div class="t" style="right:135px;top:487.22px;font-size:9.9px;text-align:right;;-webkit-text-stroke:0.1px currentColor">40,80</div>
<div class="t" style="right:102px;top:487.22px;font-size:9.9px;text-align:right;;-webkit-text-stroke:0.1px currentColor">23,00</div>
<div class="t" style="left:927px;top:501.52px;font-size:9.9px;;-webkit-text-stroke:0.1px currentColor">01.02</div>
<div class="t" style="right:524.5px;top:501.52px;font-size:9.9px;text-align:right;;-webkit-text-stroke:0.1px currentColor">26,00</div>
<div class="t" style="left:1024px;top:501.52px;font-size:9.9px;;-webkit-text-stroke:0.1px currentColor">r-g</div>
<div class="t" style="left:1052.5px;top:501.52px;font-size:9.9px;font-weight:bold;color:#17178A;">PRACOWNIK: Pomocnik murarza</div>
<div class="t" style="right:198px;top:501.52px;font-size:9.9px;text-align:right;;-webkit-text-stroke:0.1px currentColor">9,60</div>
<div class="t" style="right:135px;top:501.52px;font-size:9.9px;text-align:right;;-webkit-text-stroke:0.1px currentColor">249,60</div>
<div class="t" style="right:102px;top:501.52px;font-size:9.9px;text-align:right;;-webkit-text-stroke:0.1px currentColor">23,00</div>
<div class="t" style="left:927px;top:516.42px;font-size:9.9px;;-webkit-text-stroke:0.1px currentColor">01.03</div>
<div class="t" style="right:524.5px;top:516.42px;font-size:9.9px;text-align:right;;-webkit-text-stroke:0.1px currentColor">26,00</div>
<div class="t" style="left:1024px;top:516.42px;font-size:9.9px;;-webkit-text-stroke:0.1px currentColor">r-g</div>
<div class="t" style="left:1052.5px;top:516.42px;font-size:9.9px;font-weight:bold;color:#17178A;">PRACOWNIK: Pomocnik murarza</div>
<div class="t" style="right:198px;top:516.42px;font-size:9.9px;text-align:right;;-webkit-text-stroke:0.1px currentColor">9,60</div>
<div class="t" style="right:135px;top:516.42px;font-size:9.9px;text-align:right;;-webkit-text-stroke:0.1px currentColor">249,60</div>
<div class="t" style="right:102px;top:516.42px;font-size:9.9px;text-align:right;;-webkit-text-stroke:0.1px currentColor">23,00</div>
<div class="t" style="left:927px;top:530.72px;font-size:9.9px;;-webkit-text-stroke:0.1px currentColor">01.04</div>
<div class="t" style="right:524.5px;top:530.72px;font-size:9.9px;text-align:right;;-webkit-text-stroke:0.1px currentColor">4,00</div>
<div class="t" style="left:1024px;top:530.72px;font-size:9.9px;;-webkit-text-stroke:0.1px currentColor">m-g</div>
<div class="t" style="left:1052.5px;top:530.72px;font-size:9.9px;;-webkit-text-stroke:0.1px currentColor">Samochód samowyładowawczy 5ton</div>
<div class="t" style="right:198px;top:530.72px;font-size:9.9px;text-align:right;;-webkit-text-stroke:0.1px currentColor">52,34</div>
<div class="t" style="right:135px;top:530.72px;font-size:9.9px;text-align:right;;-webkit-text-stroke:0.1px currentColor">209,36</div>
<div class="t" style="right:102px;top:530.72px;font-size:9.9px;text-align:right;;-webkit-text-stroke:0.1px currentColor">23,00</div>
<div class="a" style="left:1343px;top:557px;width:65px;height:1px;background:#000"></div>
<div class="t" style="left:1053.4px;top:559.12px;font-size:9.9px;font-weight:bold;">Suma netto w PLN</div>
<div class="t" style="right:135px;top:559.12px;font-size:9.9px;text-align:right;;-webkit-text-stroke:0.1px currentColor">749,36</div>
<div class="t" style="left:1052.5px;top:573.22px;font-size:9.9px;;-webkit-text-stroke:0.1px currentColor">23% VAT od 749,36 PLN</div>
<div class="t" style="right:135px;top:573.22px;font-size:9.9px;text-align:right;;-webkit-text-stroke:0.1px currentColor">172,35</div>
<div class="a" style="left:1343px;top:585px;width:65px;height:1px;background:#000"></div>
<div class="t" style="left:1053.4px;top:590.82px;font-size:9.9px;font-weight:bold;color:#17178A;">Suma końcowa w PLN</div>
<div class="t" style="right:135px;top:591.12px;font-size:9.9px;text-align:right;;-webkit-text-stroke:0.1px currentColor">921,71</div>
<div class="a" style="left:1343px;top:603px;width:65px;height:1px;background:#000"></div>
<div class="a" style="left:1343px;top:605px;width:65px;height:1px;background:#000"></div>
<div class="t" style="left:927.4px;top:622.32px;font-size:9.9px;;-webkit-text-stroke:0.1px currentColor">Kwota faktury: 921,71 PLN [ słownie: dziewięćset dwadzieścia jeden 71/100 ] przypada do zapłaty dnia <b>19.05.2024</b>.</div>
<div class="t" style="left:927.4px;top:634.02px;font-size:9.9px;;-webkit-text-stroke:0.1px currentColor">Forma płatności: <b>PRZELEW</b>.</div>
<div class="t" style="left:927.4px;top:662.23px;font-size:8px;color:#333;;-webkit-text-stroke:0.1px currentColor">Czytelny podpis osoby uprawnionej do wystawienia faktury:</div>
<div class="t" style="left:1144.5px;top:662.23px;font-size:8px;color:#333;;-webkit-text-stroke:0.1px currentColor">Czytelny podpis osoby uprawnionej do odbioru faktury:</div>
<div class="a" style="left:927px;top:701px;width:175px;height:1px;background:repeating-linear-gradient(90deg,#9A9A9A 0 2px,transparent 2px 3px)"></div>
<div class="a" style="left:1144px;top:701px;width:176px;height:1px;background:repeating-linear-gradient(90deg,#9A9A9A 0 2px,transparent 2px 3px)"></div></body></html>
